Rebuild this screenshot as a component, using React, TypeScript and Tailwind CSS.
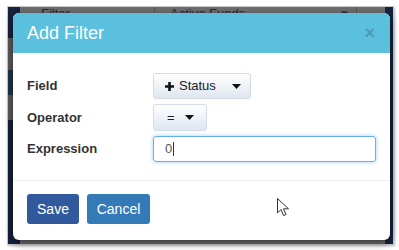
import React from 'react';

const font = { fontFamily: '"Liberation Sans", Arial, sans-serif' };

function Caret() {
  return (
    <svg width="9" height="5" viewBox="0 0 9 5" className="shrink-0">
      <path d="M0 0 L9 0 L4.5 5 Z" fill="#111" />
    </svg>
  );
}

function Plus() {
  return (
    <svg width="9" height="9" viewBox="0 0 9 9" className="mr-[5px] shrink-0">
      <path d="M4.5 0 V9 M0 4.5 H9" stroke="#111" strokeWidth="2.6" />
    </svg>
  );
}

function Backdrop() {
  return (
    <div className="flex h-full w-full bg-[#6e6e6e]">
      <div className="flex w-[12px] flex-col">
        <div className="h-[31px] bg-[#17243d]" />
        <div className="h-[32px] bg-[#5a5a5a]" />
        <div className="h-[25px] bg-[#22334d]" />
        <div className="h-[25px] bg-[#5a5a5a]" />
        <div className="flex-1 bg-[#14213a]" />
      </div>
      <div className="flex flex-1 flex-col">
        <div className="flex h-[14px] items-start text-[13px] leading-[14px] text-[#1c2a44]">
          <div className="w-[135px] border-r border-[#555] pl-[21px]">Filter</div>
          <div className="flex w-[202px] justify-between border-r border-[#555] pl-[15px] pr-[8px]">
            <span>Active Funds</span>
            <span>▾</span>
          </div>
        </div>
        <div className="flex-1 bg-[#707070]" />
      </div>
      <div className="w-[8px] bg-[#17243d]" />
    </div>
  );
}

function Modal() {
  return (
    <div className="absolute left-[5px] top-[6px] flex h-[227px] w-[377px] flex-col overflow-hidden rounded-[6px] bg-white shadow-[0_3px_9px_rgba(0,0,0,0.5)]">
      <div className="flex h-[40px] items-center justify-between bg-[#5bc0de] pl-[14px] pr-[15px]">
        <span className="text-[18px] text-white">Add Filter</span>
        <span className="text-[18px] font-bold leading-none text-[#4a9db5]">×</span>
      </div>
      <div className="flex flex-col gap-[5px] px-[14px] pt-[20px] pb-[18px] text-[13px] text-[#333]">
        <div className="flex items-center">
          <label className="w-[126px] font-bold">Field</label>
          <button className="flex h-[26px] w-[98px] items-center rounded-[3px] border border-[#d3dbe6] bg-gradient-to-b from-[#ffffff] to-[#dfe6f0] pl-[11px] pr-[9px] text-[#222]">
            <Plus />
            <span className="text-[13px]">Status</span>
            <span className="ml-auto"><Caret /></span>
          </button>
        </div>
        <div className="flex items-center">
          <label className="w-[126px] font-bold">Operator</label>
          <button className="flex h-[27px] w-[54px] items-center rounded-[3px] border border-[#d3dbe6] bg-gradient-to-b from-[#ffffff] to-[#dfe6f0] pl-[13px] pr-[12px] text-[#222]">
            <span className="text-[13px]">=</span>
            <span className="ml-auto"><Caret /></span>
          </button>
        </div>
        <div className="flex items-center">
          <label className="w-[126px] font-bold">Expression</label>
          <div className="flex h-[26px] w-[223px] items-center rounded-[3px] border border-[#66afe9] pl-[11px] text-[13px] text-[#555] shadow-[0_0_4px_rgba(102,175,233,0.6)]">
            0<span className="ml-[1px] inline-block h-[14px] w-[1px] bg-[#333]" />
          </div>
        </div>
      </div>
      <div className="relative flex flex-1 items-start gap-[8px] border-t border-[#eeeeee] px-[14px] pt-[13px]">
        <button className="h-[30px] w-[52px] rounded-[3px] bg-[#30599e] text-[14px] text-white">Save</button>
        <button className="h-[30px] w-[63px] rounded-[3px] bg-[#337ab7] text-[14px] text-white">Cancel</button>
        <svg className="absolute left-[264px] top-[17px]" width="13" height="20" viewBox="0 0 13 20">
          <path d="M0.5 0.5 L0.5 15 L4 11.5 L6.5 17.5 L9 16.5 L6.5 10.8 L11.5 10.8 Z" fill="#fff" stroke="#333" strokeWidth="1" />
        </svg>
      </div>
    </div>
  );
}

export default function App() {
  return (
    <div className="h-[250px] w-[399px] bg-white pl-[7px] pt-[6px]" style={font}>
      <div className="relative h-[239px] w-[387px] border border-[#c9c9c9] shadow-[1px_1px_2px_rgba(0,0,0,0.25)]">
        <Backdrop />
        <Modal />
      </div>
    </div>
  );
}
